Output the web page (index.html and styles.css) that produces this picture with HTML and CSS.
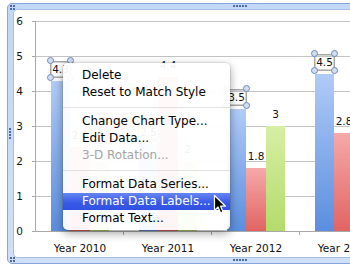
FILE: index.html
```html
<!DOCTYPE html>
<html>
<head>
<meta charset="utf-8">
<link rel="stylesheet" href="styles.css">
</head>
<body>
<div class="frame">
  <span class="grip g-tl"></span>
  <span class="grip g-tm"></span>
  <span class="grip g-ml"></span>
  <span class="grip g-bl"></span>
  <span class="grip g-bm"></span>
  <div class="chart">
    <div class="yaxis">
      <div class="yrow"><span>6</span><i></i></div>
      <div class="yrow"><span>5</span><i></i></div>
      <div class="yrow"><span>4</span><i></i></div>
      <div class="yrow"><span>3</span><i></i></div>
      <div class="yrow"><span>2</span><i></i></div>
      <div class="yrow"><span>1</span><i></i></div>
      <div class="yrow last"><span>0</span><i></i></div>
    </div>
    <div class="plot">
      <div class="cat">
        <div class="slot"><span class="lbl sel">4.3<i class="h tl"></i><i class="h tr"></i><i class="h bl"></i><i class="h br"></i></span><div class="bar blue" style="height:150.5px"></div></div>
        <div class="slot"><span class="lbl">2.4</span><div class="bar red" style="height:84px"></div></div>
        <div class="slot"><span class="lbl">2</span><div class="bar green" style="height:70px"></div></div>
      </div>
      <div class="cat">
        <div class="slot"><span class="lbl sel">2.5<i class="h tl"></i><i class="h tr"></i><i class="h bl"></i><i class="h br"></i></span><div class="bar blue" style="height:87.5px"></div></div>
        <div class="slot"><span class="lbl">4.4</span><div class="bar red" style="height:154px"></div></div>
        <div class="slot"><span class="lbl">2</span><div class="bar green" style="height:70px"></div></div>
      </div>
      <div class="cat">
        <div class="slot"><span class="lbl sel">3.5<i class="h tl"></i><i class="h tr"></i><i class="h bl"></i><i class="h br"></i></span><div class="bar blue" style="height:122.5px"></div></div>
        <div class="slot"><span class="lbl">1.8</span><div class="bar red" style="height:63px"></div></div>
        <div class="slot"><span class="lbl">3</span><div class="bar green" style="height:105px"></div></div>
      </div>
      <div class="cat">
        <div class="slot"><span class="lbl sel">4.5<i class="h tl"></i><i class="h tr"></i><i class="h bl"></i><i class="h br"></i></span><div class="bar blue" style="height:157.5px"></div></div>
        <div class="slot"><span class="lbl">2.8</span><div class="bar red" style="height:98px"></div></div>
        <div class="slot"><span class="lbl">5</span><div class="bar green" style="height:175px"></div></div>
      </div>
    </div>
    <div></div>
    <div class="xaxis">
      <div class="xcat">Year 2010</div>
      <div class="xcat">Year 2011</div>
      <div class="xcat">Year 2012</div>
      <div class="xcat">Year 2013</div>
    </div>
  </div>
</div>

<div class="menu">
  <div class="mi">Delete</div>
  <div class="mi">Reset to Match Style</div>
  <div class="sep"></div>
  <div class="mi">Change Chart Type...</div>
  <div class="mi">Edit Data...</div>
  <div class="mi dis">3-D Rotation...</div>
  <div class="sep"></div>
  <div class="mi">Format Data Series...</div>
  <div class="mi hi">Format Data Labels...</div>
  <div class="mi">Format Text...</div>
</div>

<svg class="cursor" width="14" height="21" viewBox="0 0 14 21">
  <path d="M1.5 1.5 L1.5 16.5 L5 13 L7.5 18.8 L10 17.8 L7.6 12.2 L12.5 12.2 Z" fill="#000" stroke="#fff" stroke-width="1.2" stroke-linejoin="round"/>
</svg>
</body>
</html>
```

FILE: styles.css
```css
html, body {
  margin: 0;
  padding: 0;
  width: 350px;
  height: 270px;
  overflow: hidden;
  background: #ffffff;
}

body {
  font-family: "DejaVu Sans", "Liberation Sans", sans-serif;
  color: #111;
}

.frame {
  position: relative;
  margin: 3px 0 0 7px;
  width: 466px;
  height: 261px;
  box-sizing: border-box;
  border: 1px solid #86a5dc;
  border-radius: 5px;
  padding: 6px;
  background: linear-gradient(#c3d7f6, #cfdff8);
}

.grip {
  position: absolute;
  background-image: radial-gradient(circle at 1px 1px, #4c6aa3 0.8px, transparent 1.2px);
  background-size: 3px 3px;
}
.g-tl { left: 2px; top: 1px; width: 6px; height: 6px; }
.g-tm { left: 225px; top: 1px; width: 15px; height: 3px; }
.g-ml { left: 1px; top: 124px; width: 3px; height: 12px; }
.g-bl { left: 2px; bottom: 0; width: 6px; height: 6px; }
.g-bm { left: 225px; bottom: 1px; width: 15px; height: 3px; }

.chart {
  height: 247px;
  box-sizing: border-box;
  background: #fff;
  border-radius: 4px 0 0 4px;
  box-shadow: 0 0 0 1px #a6bfe9;
  padding-top: 11px;
  display: grid;
  grid-template-columns: 21px 1fr;
  grid-template-rows: 211px 25px;
  font-size: 10.5px;
}

.yaxis {
  display: flex;
  flex-direction: column;
}
.yrow {
  height: 35px;
  flex: none;
  display: flex;
  justify-content: flex-end;
  align-items: flex-start;
  gap: 9px;
}
.yrow.last { height: 1px; }
.yrow span {
  line-height: 12px;
  margin-top: -6px;
}
.yrow i {
  width: 3px;
  height: 1px;
  background: #a8a8a8;
}

.plot {
  box-sizing: border-box;
  border-left: 1px solid #a8a8a8;
  border-bottom: 1px solid #a8a8a8;
  background: repeating-linear-gradient(to bottom, #c4c4c4 0, #c4c4c4 1px, transparent 1px, transparent 35px);
  display: flex;
  align-items: stretch;
}

.cat {
  width: 88px;
  flex: none;
  display: flex;
  justify-content: center;
  align-items: flex-end;
}

.slot {
  width: 19.5px;
  display: flex;
  flex-direction: column;
  align-items: center;
}

.lbl {
  position: relative;
  height: 17px;
  line-height: 17px;
  margin-bottom: 3px;
  padding: 0 2px;
  white-space: nowrap;
  color: #111;
}
.lbl.sel {
  box-shadow: inset 0 0 0 1.5px #a6a6a6;
}
.h {
  position: absolute;
  width: 7px;
  height: 7px;
  box-sizing: border-box;
  border-radius: 50%;
  background: #d2def2;
  border: 1px solid #6c89ba;
}
.h.tl { left: -3.5px; top: -3.5px; }
.h.tr { right: -3.5px; top: -3.5px; }
.h.bl { left: -3.5px; bottom: -3.5px; }
.h.br { right: -3.5px; bottom: -3.5px; }

.bar { width: 100%; }
.bar.blue { background: linear-gradient(#b0cbf7, #5b8edf); }
.bar.red { background: linear-gradient(#f6a9a9, #e16464); }
.bar.green { background: linear-gradient(#d6efa4, #b4db6a); }

.xaxis {
  display: flex;
  padding-left: 1px;
}
.xcat {
  position: relative;
  width: 88px;
  flex: none;
  text-align: center;
  padding-top: 10px;
  line-height: 13px;
  white-space: nowrap;
}
.xcat::after {
  content: "";
  position: absolute;
  right: 0;
  top: 0;
  width: 1px;
  height: 3px;
  background: #a8a8a8;
}

.menu {
  position: absolute;
  left: 63px;
  top: 63px;
  width: 167px;
  box-sizing: border-box;
  padding: 4px 0 3px;
  background: rgba(255, 255, 255, 0.94);
  border-radius: 5px;
  box-shadow: 0 3px 10px rgba(0, 0, 0, 0.38), 0 0 0 1px rgba(0, 0, 0, 0.07);
  font-family: "DejaVu Sans", sans-serif;
  font-size: 12px;
}
.mi {
  height: 17px;
  line-height: 17px;
  padding-left: 19px;
  white-space: nowrap;
  color: #000;
}
.mi.dis { color: #a4a4a4; }
.mi.hi {
  background: linear-gradient(#6685f3, #3a5be7 55%, #2f50e2);
  color: #fff;
}
.sep {
  height: 1px;
  background: #e2e2e2;
  margin: 6px 0 5px;
}

.cursor {
  position: absolute;
  left: 213px;
  top: 194px;
}
```
